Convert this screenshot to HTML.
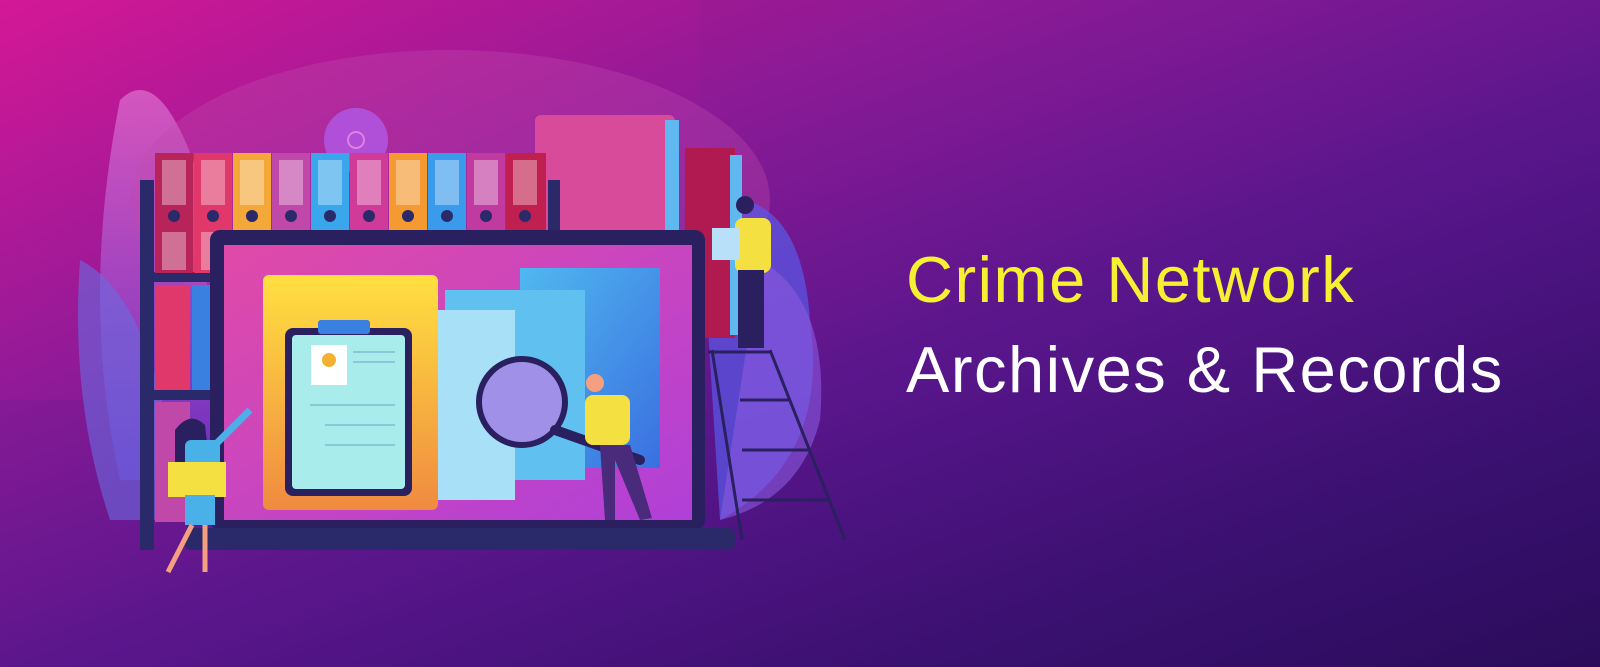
<!DOCTYPE html>
<html><head><meta charset="utf-8"><style>
html,body{margin:0;padding:0}
body{width:1600px;height:667px;overflow:hidden;position:relative;
background:linear-gradient(160deg,#c8168e 0%,#8a1a96 30%,#5a168c 55%,#3a1070 80%,#2a0c5a 100%);font-family:"Liberation Sans","DejaVu Sans",sans-serif}
.t{position:absolute;left:906px;font-size:65px;letter-spacing:1.5px;white-space:nowrap}
</style></head><body>
<svg width="1600" height="667" style="position:absolute;left:0;top:0">
<defs>
<linearGradient id="bgL" x1="0" y1="0" x2="1" y2="1"><stop offset="0" stop-color="#e01aa0"/><stop offset="1" stop-color="#7a1a9a" stop-opacity="0"/></linearGradient>
<linearGradient id="scr" x1="0" y1="0" x2="1" y2="1"><stop offset="0" stop-color="#e04aa8"/><stop offset="1" stop-color="#b040d8"/></linearGradient>
<linearGradient id="yel" x1="0" y1="0" x2="0" y2="1"><stop offset="0" stop-color="#ffe040"/><stop offset="1" stop-color="#f08a40"/></linearGradient>
<linearGradient id="blu" x1="0" y1="0" x2="1" y2="1"><stop offset="0" stop-color="#50b8f0"/><stop offset="1" stop-color="#3a70e0"/></linearGradient>
<linearGradient id="leaf" x1="0" y1="0" x2="0" y2="1"><stop offset="0" stop-color="#e070d0"/><stop offset="1" stop-color="#6a3ad0"/></linearGradient>
</defs>
<rect width="700" height="400" fill="url(#bgL)" opacity=".5"/>
<path d="M120 100 Q160 60 200 180 L220 480 L120 480 Q80 300 120 100Z" fill="url(#leaf)" opacity=".7"/>
<path d="M80 260 Q160 300 180 520 L110 520 Q70 400 80 260Z" fill="#6a6ae0" opacity=".6"/>
<ellipse cx="450" cy="200" rx="320" ry="150" fill="#c04ab0" opacity=".35"/>
<path d="M700 200 Q800 180 810 320 Q830 460 720 520Z" fill="#5a5ae8" opacity=".7"/>
<path d="M760 260 Q830 300 820 420 Q800 500 720 520Z" fill="#8a5ae0" opacity=".6"/>
<circle cx="356" cy="140" r="32" fill="#b050d8"/>
<circle cx="356" cy="140" r="8" fill="none" stroke="#e080e0" stroke-width="2"/>
<rect x="535" y="115" width="140" height="140" rx="6" fill="#d84a9a"/>
<rect x="665" y="120" width="14" height="130" fill="#60b8f0"/>
<rect x="685" y="148" width="50" height="190" fill="#b01a50"/>
<rect x="730" y="155" width="12" height="180" fill="#60b8f0"/>
<rect x="140" y="180" width="14" height="370" fill="#2a2a6a"/>
<rect x="140" y="272" width="420" height="10" fill="#2a2a6a"/>
<rect x="140" y="390" width="90" height="10" fill="#2a2a6a"/>
<rect x="548" y="180" width="12" height="100" fill="#2a2a6a"/>
<g>
<rect x="155" y="153" width="38" height="120" fill="#b8245a"/>
<rect x="194" y="153" width="38" height="120" fill="#e0386a"/>
<rect x="233" y="153" width="38" height="120" fill="#f4a83a"/>
<rect x="272" y="153" width="38" height="120" fill="#c048a8"/>
<rect x="311" y="153" width="38" height="120" fill="#3aa6ec"/>
<rect x="350" y="153" width="38" height="120" fill="#d03a98"/>
<rect x="389" y="153" width="38" height="120" fill="#f49a30"/>
<rect x="428" y="153" width="38" height="120" fill="#3a9aec"/>
<rect x="467" y="153" width="38" height="120" fill="#c03aa0"/>
<rect x="506" y="153" width="40" height="120" fill="#c02050"/>
</g>
<g fill="#ffffff" opacity=".35">
<rect x="162" y="160" width="24" height="45"/><rect x="201" y="160" width="24" height="45"/><rect x="240" y="160" width="24" height="45"/><rect x="279" y="160" width="24" height="45"/><rect x="318" y="160" width="24" height="45"/><rect x="357" y="160" width="24" height="45"/><rect x="396" y="160" width="24" height="45"/><rect x="435" y="160" width="24" height="45"/><rect x="474" y="160" width="24" height="45"/><rect x="513" y="160" width="24" height="45"/>
<rect x="162" y="232" width="24" height="38"/><rect x="201" y="232" width="24" height="38"/>
</g>
<g fill="#2a2a6a"><circle cx="174" cy="216" r="6"/><circle cx="213" cy="216" r="6"/><circle cx="252" cy="216" r="6"/><circle cx="291" cy="216" r="6"/><circle cx="330" cy="216" r="6"/><circle cx="369" cy="216" r="6"/><circle cx="408" cy="216" r="6"/><circle cx="447" cy="216" r="6"/><circle cx="486" cy="216" r="6"/><circle cx="525" cy="216" r="6"/></g>
<rect x="155" y="285" width="35" height="105" fill="#e0386a"/>
<rect x="192" y="285" width="25" height="105" fill="#3a80e0"/>
<rect x="155" y="402" width="35" height="120" fill="#c048a8"/>
<rect x="210" y="230" width="495" height="300" rx="10" fill="#2a2060"/>
<rect x="224" y="245" width="468" height="275" fill="url(#scr)"/>
<rect x="185" y="528" width="550" height="22" rx="6" fill="#2a2a6a"/>
<rect x="520" y="268" width="140" height="200" fill="url(#blu)"/>
<rect x="445" y="290" width="140" height="190" fill="#60c0f0"/>
<rect x="425" y="310" width="90" height="190" fill="#a8e0f8"/>
<rect x="263" y="275" width="175" height="235" rx="6" fill="url(#yel)"/>
<rect x="285" y="328" width="127" height="168" rx="8" fill="#2a2060"/>
<rect x="292" y="335" width="113" height="154" rx="4" fill="#a8ecec"/>
<rect x="318" y="320" width="52" height="14" rx="3" fill="#3a80e0"/>
<rect x="311" y="345" width="36" height="40" fill="#ffffff"/>
<circle cx="329" cy="360" r="7" fill="#f4b030"/>
<g stroke="#8ac8d8" stroke-width="2"><line x1="353" y1="352" x2="395" y2="352"/><line x1="353" y1="362" x2="395" y2="362"/><line x1="310" y1="405" x2="395" y2="405"/><line x1="325" y1="425" x2="395" y2="425"/><line x1="325" y1="445" x2="395" y2="445"/></g>
<circle cx="522" cy="402" r="43" fill="#a090e8" stroke="#2a2060" stroke-width="6"/>
<line x1="555" y1="430" x2="640" y2="460" stroke="#2a2060" stroke-width="10" stroke-linecap="round"/>
<rect x="585" y="395" width="45" height="50" rx="8" fill="#f4e040"/>
<circle cx="595" cy="383" r="9" fill="#f4a080"/>
<path d="M600 445 L605 520 L615 520 L615 460 L640 520 L652 518 L630 445Z" fill="#4a2a7a"/>
<rect x="735" y="218" width="36" height="55" rx="8" fill="#f4e040"/>
<circle cx="745" cy="205" r="9" fill="#2a2060"/>
<rect x="738" y="270" width="26" height="78" fill="#2a2060"/>
<rect x="712" y="228" width="28" height="32" fill="#b8e0f8"/>
<g stroke="#2a2060" stroke-width="3" fill="none"><line x1="712" y1="350" x2="742" y2="540"/><line x1="770" y1="350" x2="845" y2="540"/><line x1="708" y1="352" x2="772" y2="352"/><line x1="740" y1="400" x2="790" y2="400"/><line x1="742" y1="450" x2="810" y2="450"/><line x1="742" y1="500" x2="828" y2="500"/></g>
<path d="M175 430 Q190 410 205 425 L210 470 L175 470Z" fill="#2a2060"/>
<rect x="185" y="440" width="35" height="40" rx="6" fill="#4ab0e8"/>
<line x1="215" y1="445" x2="250" y2="410" stroke="#4ab0e8" stroke-width="7"/>
<rect x="168" y="462" width="58" height="35" fill="#f4e040"/>
<rect x="185" y="495" width="30" height="30" fill="#4ab0e8"/>
<g stroke="#f4a080" stroke-width="5"><line x1="192" y1="525" x2="168" y2="572"/><line x1="205" y1="525" x2="205" y2="572"/></g>
</svg>
<div class="t" style="top:242px;color:#f6f032">Crime Network</div>
<div class="t" style="top:332px;color:#ffffff">Archives &amp; Records</div>
</body></html>
